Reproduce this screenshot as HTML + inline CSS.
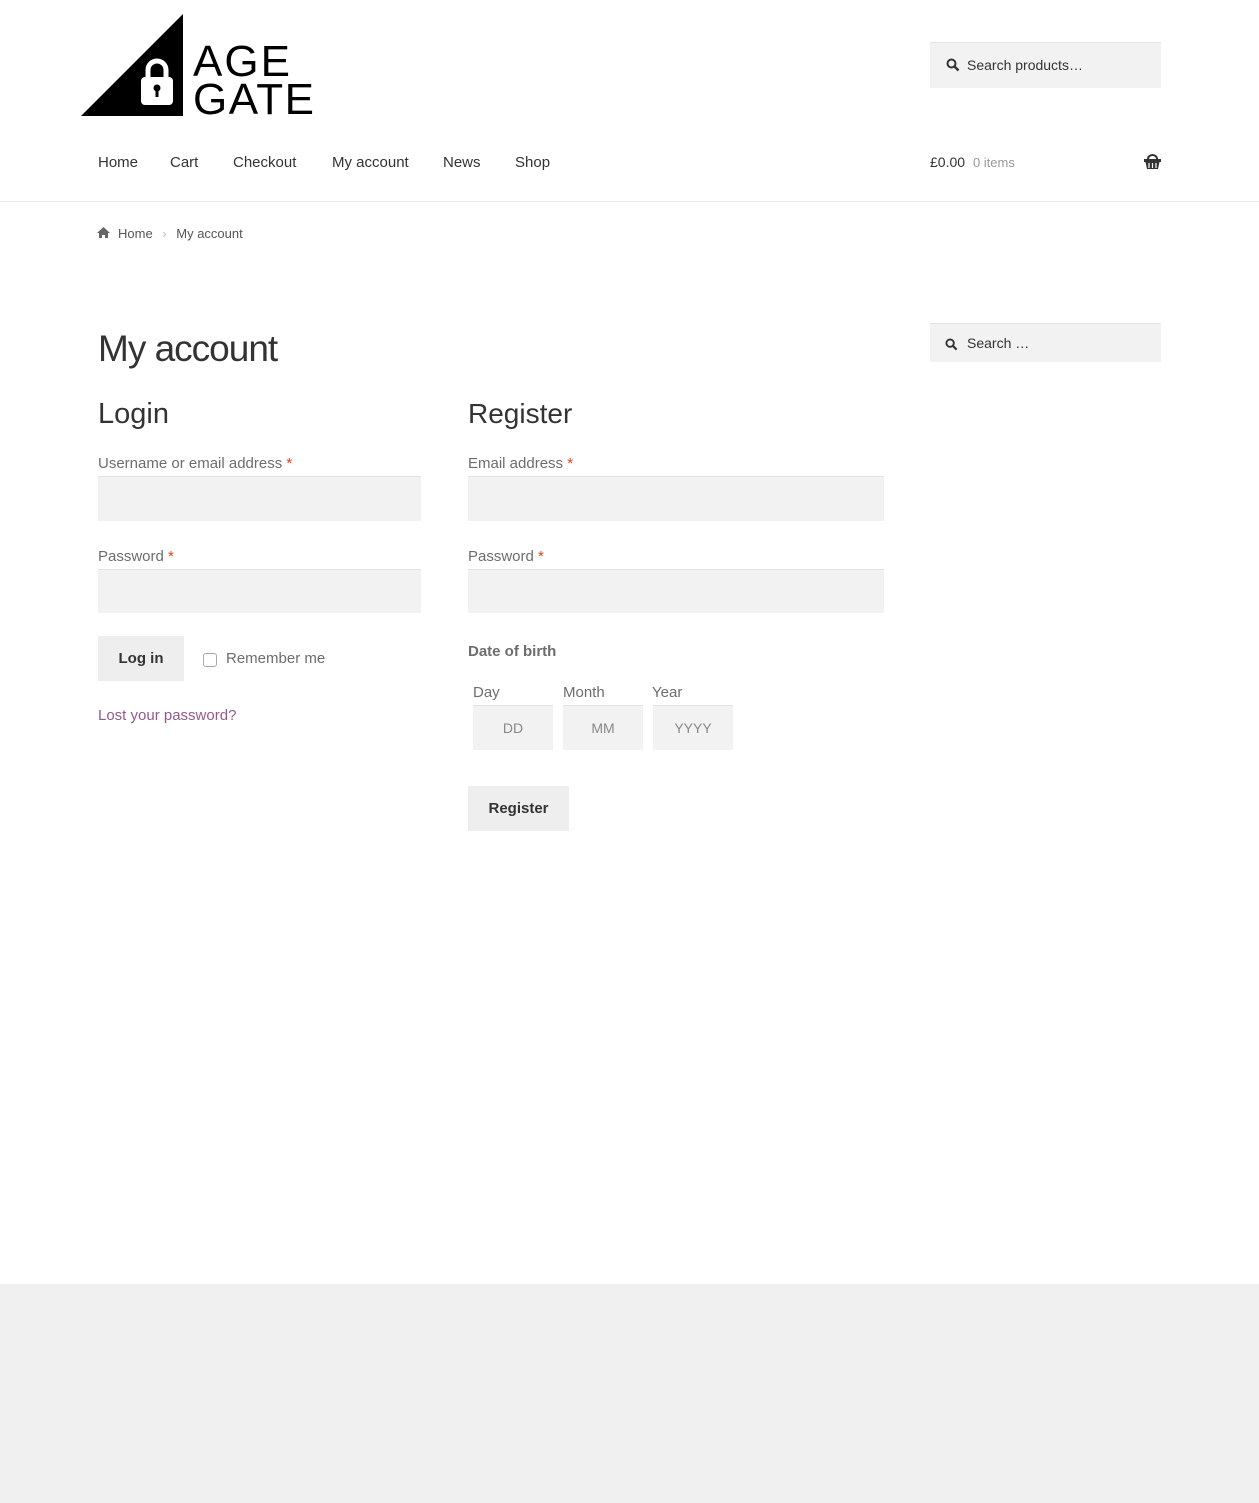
<!DOCTYPE html>
<html><head><meta charset="utf-8"><style>
*{box-sizing:border-box;margin:0;padding:0}
body{width:1259px;height:1503px;font-family:"Liberation Sans",sans-serif;color:#43454b;background:#fff;position:relative;overflow:hidden;font-size:15px}
.a{position:absolute;white-space:nowrap}
.in{position:absolute;background:#f2f2f2;border-top:1px solid #e2e2e2}
.lbl{font-size:15px;color:#6d6d6d}
.req{color:#e2401c}
.btn{position:absolute;background:#eee;font-weight:bold;color:#333;font-size:15px;display:flex;align-items:center;justify-content:center}
nav span{position:absolute;top:154px;font-size:15px;color:#333}
</style></head><body>
<svg class="a" style="left:81px;top:14px" width="240" height="104" viewBox="0 0 240 104">
<polygon points="0,102 102,0 102,102" fill="#000"/>
<path d="M67,64 v-8 a9,9 0 0 1 18,0 v8" fill="none" stroke="#fff" stroke-width="5"/>
<rect x="60" y="63" width="32" height="28" rx="4" fill="#fff"/>
<circle cx="76" cy="74" r="3.5" fill="#000"/><rect x="74.5" y="74" width="3" height="9" fill="#000"/>
<text x="112" y="62" font-family="Liberation Sans" font-size="44" fill="#000" letter-spacing="2">AGE</text>
<text x="112" y="100" font-family="Liberation Sans" font-size="44" fill="#000" letter-spacing="1.5">GATE</text>
</svg>
<div class="a" style="left:930px;top:42px;width:231px;height:46px;background:#f2f2f2;border-top:1px solid #e4e4e4"></div>
<svg class="a" style="left:946px;top:58px" width="14" height="14" viewBox="0 0 14 14"><circle cx="5.5" cy="5.5" r="4" fill="none" stroke="#333" stroke-width="2"/><line x1="8.5" y1="8.5" x2="12.5" y2="12.5" stroke="#333" stroke-width="2.4"/></svg>
<div class="a" style="left:967px;top:57px;font-size:14px;color:#333">Search products…</div>
<nav><span style="left:98px">Home</span><span style="left:170px">Cart</span><span style="left:233px">Checkout</span><span style="left:332px">My account</span><span style="left:443px">News</span><span style="left:515px">Shop</span></nav>
<div class="a" style="left:930px;top:154px;font-size:14px;color:#333">£0.00 <span style="font-size:13px;color:#999;margin-left:4px">0 items</span></div>
<svg class="a" style="left:1143px;top:153px" width="19" height="17" viewBox="0 0 19 17"><path d="M5,6 a4.5,4 0 0 1 9,0" fill="none" stroke="#333" stroke-width="2"/><rect x="1" y="6" width="17" height="3" fill="#333"/><path d="M2.5,9 h14 l-1.5,7 h-11z" fill="#333"/><path d="M6,10 v5 M9.5,10 v5 M13,10 v5" stroke="#fff" stroke-width="1.2"/></svg>
<div class="a" style="left:0;top:201px;width:1259px;height:1px;background:#ececec"></div>
<svg class="a" style="left:97px;top:227px" width="13" height="11" viewBox="0 0 13 11"><path d="M6.5,0 L13,6 h-2 v5 h-3 v-3 h-3 v3 h-3 v-5 h-2z" fill="#666"/></svg>
<div class="a" style="left:118px;top:226px;font-size:13px;color:#555">Home <span style="color:#bbb;margin:0 6px">›</span> My account</div>
<div class="a" style="left:98px;top:328px;font-size:37px;color:#333;letter-spacing:-1px">My account</div>
<div class="a" style="left:930px;top:323px;width:231px;height:39px;background:#f2f2f2;border-top:1px solid #e4e4e4"></div>
<svg class="a" style="left:945px;top:338px" width="13" height="13" viewBox="0 0 14 14"><circle cx="5.5" cy="5.5" r="4" fill="none" stroke="#333" stroke-width="2"/><line x1="8.5" y1="8.5" x2="12.5" y2="12.5" stroke="#333" stroke-width="2.4"/></svg>
<div class="a" style="left:967px;top:335px;font-size:14px;color:#333">Search …</div>
<div class="a" style="left:98px;top:398px;font-size:29px;color:#333">Login</div>
<div class="a" style="left:468px;top:398px;font-size:28px;color:#333">Register</div>
<div class="a lbl" style="left:98px;top:455px">Username or email address <span class="req">*</span></div>
<div class="in" style="left:98px;top:476px;width:323px;height:45px"></div>
<div class="a lbl" style="left:98px;top:548px">Password <span class="req">*</span></div>
<div class="in" style="left:98px;top:569px;width:323px;height:44px"></div>
<div class="btn" style="left:98px;top:636px;width:86px;height:45px">Log in</div>
<div class="a" style="left:203px;top:653px;width:14px;height:14px;border:1px solid #aaa;border-radius:3px"></div>
<div class="a lbl" style="left:226px;top:650px">Remember me</div>
<div class="a" style="left:98px;top:707px;font-size:15px;color:#96588a">Lost your password?</div>
<div class="a lbl" style="left:468px;top:455px">Email address <span class="req">*</span></div>
<div class="in" style="left:468px;top:476px;width:416px;height:45px"></div>
<div class="a lbl" style="left:468px;top:548px">Password <span class="req">*</span></div>
<div class="in" style="left:468px;top:569px;width:416px;height:44px"></div>
<div class="a" style="left:468px;top:643px;font-size:15px;font-weight:bold;color:#6d6d6d">Date of birth</div>
<div class="a lbl" style="left:473px;top:684px">Day</div>
<div class="a lbl" style="left:563px;top:684px">Month</div>
<div class="a lbl" style="left:652px;top:684px">Year</div>
<div class="in" style="left:473px;top:705px;width:80px;height:45px;display:flex;align-items:center;justify-content:center;color:#888;font-size:14px">DD</div>
<div class="in" style="left:563px;top:705px;width:80px;height:45px;display:flex;align-items:center;justify-content:center;color:#888;font-size:14px">MM</div>
<div class="in" style="left:653px;top:705px;width:80px;height:45px;display:flex;align-items:center;justify-content:center;color:#888;font-size:14px">YYYY</div>
<div class="btn" style="left:468px;top:786px;width:101px;height:45px">Register</div>
<div class="a" style="left:0;top:1284px;width:1259px;height:219px;background:#f0f0f0"></div>
</body></html>
